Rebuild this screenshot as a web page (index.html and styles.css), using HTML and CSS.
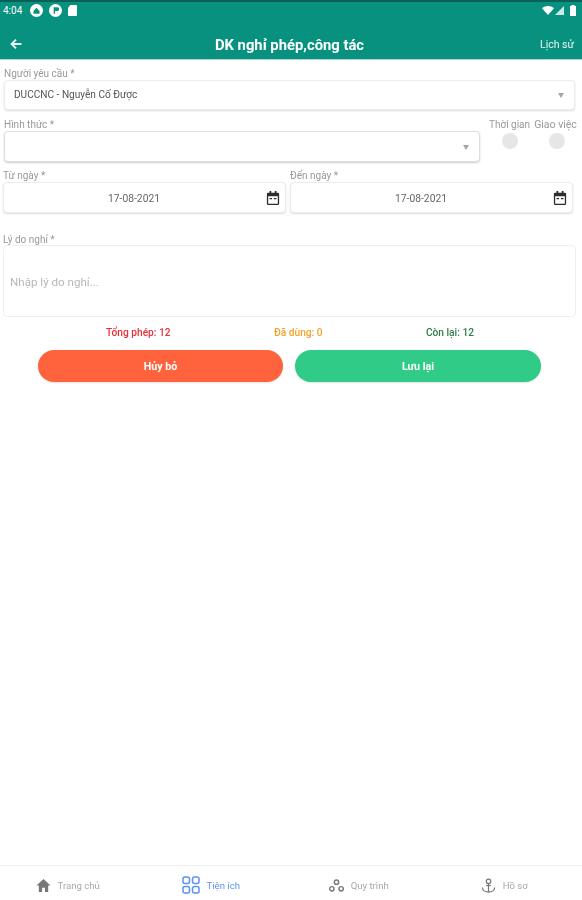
FILE: index.html
```html
<!DOCTYPE html>
<html lang="vi">
<head>
<meta charset="utf-8">
<title>DK nghỉ phép, công tác</title>
<link rel="stylesheet" href="styles.css">
</head>
<body>
<div class="app">
  <header class="top">
    <div class="status">
      <div class="status-left">
        <span class="clock">4:04</span>
        <svg class="st-icon" viewBox="0 0 12 12"><circle cx="6" cy="6" r="6" fill="#fff"/><path d="M3.2 6.5 6 3.4l2.8 3.1V9H3.2z" fill="#08917f"/></svg>
        <svg class="st-icon" viewBox="0 0 12 12"><circle cx="6" cy="6" r="6" fill="#fff"/><path d="M4.3 3h3.4a1.6 1.6 0 0 1 0 3.4H5.6V9H4.3z" fill="#08917f"/></svg>
        <svg class="st-icon st-card" viewBox="0 0 9 11"><path d="M2.5 0H8a1 1 0 0 1 1 1v9a1 1 0 0 1-1 1H1a1 1 0 0 1-1-1V2.8z" fill="#fff"/></svg>
      </div>
      <div class="status-right">
        <svg class="sys-wifi" viewBox="0 0 12 9"><path d="M0 2.2C3.4-.7 8.6-.7 12 2.2L6 9z" fill="#fff"/></svg>
        <svg class="sys-signal" viewBox="0 0 9 9"><path d="M9 0v9H0z" fill="#cfe9e5"/></svg>
        <svg class="sys-batt" viewBox="0 0 6 11"><path d="M1.5 0h3v1H6v10H0V1h1.5z" fill="#fff"/></svg>
      </div>
    </div>
    <div class="toolbar">
      <svg class="back" viewBox="0 0 12 12"><path d="M11.5 6H2M6 1.6 1.6 6 6 10.4" fill="none" stroke="#e6f4f2" stroke-width="2"/></svg>
      <h1 class="title">DK nghỉ phép,công tác</h1>
      <span class="history">Lịch sử</span>
    </div>
  </header>

  <main class="form">
    <section class="field requester">
      <label class="label">Người yêu cầu *</label>
      <div class="box select">
        <span class="value">DUCCNC - Nguyễn Cố Được</span>
        <span class="caret"></span>
      </div>
    </section>

    <section class="type-row">
      <div class="field type-field">
        <label class="label">Hình thức *</label>
        <div class="box select type-select"><span class="caret"></span></div>
      </div>
      <div class="toggle toggle-time"><span class="toggle-label">Thời gian</span><span class="dot"></span></div>
      <div class="toggle toggle-work"><span class="toggle-label">Giao việc</span><span class="dot"></span></div>
    </section>

    <section class="date-row">
      <div class="field date-from">
        <label class="label">Từ ngày *</label>
        <div class="box date">
          <span class="date-value">17-08-2021</span>
          <svg class="cal" viewBox="0 0 16 16"><path d="M4 0h2v2h4V0h2v2h1.5A1.5 1.5 0 0 1 15 3.5v11a1.5 1.5 0 0 1-1.5 1.5h-11A1.5 1.5 0 0 1 1 14.5v-11A1.5 1.5 0 0 1 2.500 2H4zM2.500 6v8.500h11V6zM4 8h3v1.500H4zM9 8h3v1.500H9z" fill="#2c2c2c" fill-rule="evenodd"/></svg>
        </div>
      </div>
      <div class="field date-to">
        <label class="label">Đến ngày *</label>
        <div class="box date">
          <span class="date-value">17-08-2021</span>
          <svg class="cal" viewBox="0 0 16 16"><path d="M4 0h2v2h4V0h2v2h1.5A1.5 1.5 0 0 1 15 3.5v11a1.5 1.5 0 0 1-1.5 1.5h-11A1.5 1.5 0 0 1 1 14.5v-11A1.5 1.5 0 0 1 2.500 2H4zM2.500 6v8.500h11V6zM4 8h3v1.500H4zM9 8h3v1.500H9z" fill="#2c2c2c" fill-rule="evenodd"/></svg>
        </div>
      </div>
    </section>

    <section class="field reason">
      <label class="label">Lý do nghỉ *</label>
      <div class="box textarea">Nhập lý do nghỉ...</div>
    </section>

    <section class="stats">
      <span class="stat stat-total">Tổng phép: 12</span>
      <span class="stat stat-used">Đã dùng: 0</span>
      <span class="stat stat-left">Còn lại: 12</span>
    </section>

    <section class="actions">
      <button class="btn btn-cancel">Hủy bỏ</button>
      <button class="btn btn-save">Lưu lại</button>
    </section>
  </main>

  <nav class="tabs">
    <a class="tab">
      <svg class="tab-icon" viewBox="0 0 16 16"><path d="M8 1 0.500 8H3v7h3.500v-4.500h3V15H13V8h2.500z" fill="#777"/></svg>
      <span>Trang chủ</span>
    </a>
    <a class="tab tab-active">
      <svg class="tab-icon tab-icon-lg" viewBox="0 0 18 18"><g fill="none" stroke="#5b93f0" stroke-width="1.500"><rect x="1" y="1" width="6.500" height="6.500" rx="2"/><rect x="10.500" y="1" width="6.500" height="6.500" rx="2"/><rect x="1" y="10.500" width="6.500" height="6.500" rx="2"/><rect x="10.500" y="10.500" width="6.500" height="6.500" rx="2"/></g></svg>
      <span>Tiện ích</span>
    </a>
    <a class="tab">
      <svg class="tab-icon" viewBox="0 0 16 16"><g fill="none" stroke="#777" stroke-width="1.500"><circle cx="8" cy="4.500" r="2.300"/><circle cx="3" cy="11.500" r="2.300"/><circle cx="13" cy="11.500" r="2.300"/></g></svg>
      <span>Quy trình</span>
    </a>
    <a class="tab">
      <svg class="tab-icon" viewBox="0 0 16 16"><g fill="none" stroke="#777" stroke-width="1.300"><circle cx="8" cy="3.500" r="2.400"/><path d="M8 6v9M1.500 10c0 3 3 5 6.500 5s6.500-2 6.500-5"/><path d="M5.500 8h5"/></g></svg>
      <span>Hồ sơ</span>
    </a>
  </nav>
</div>
</body>
</html>
```

FILE: styles.css
```css
* { box-sizing: border-box; }

html, body {
  margin: 0;
  height: 100%;
  background: #fff;
}

.app {
  width: 582px;
  height: 900px;
  display: flex;
  flex-direction: column;
  font-family: Roboto, "Noto Sans", sans-serif;
  color: #333;
  overflow: hidden;
  filter: blur(0.6px);
}

/* Header */
.top {
  height: 60px;
  flex: none;
  background: #08917f;
  border-top: 2px solid #0b5f56;
  border-bottom: 1px solid #a9d8d1;
  color: #fff;
}

.status {
  height: 16px;
  padding: 0 6px 0 3px;
  display: flex;
  justify-content: space-between;
  align-items: center;
}

.status-left, .status-right {
  display: flex;
  align-items: center;
}

.status-left { gap: 6px; }
.status-right { gap: 1px; }

.clock { font-size: 10px; margin-right: 2px; width: 19px; }
.st-icon { width: 13px; height: 13px; display: block; }
.st-card { width: 9px; height: 11px; }
.sys-wifi { width: 12px; height: 9px; }
.sys-signal { width: 9px; height: 9px; }
.sys-batt { width: 6px; height: 11px; margin-left: 5px; }

.toolbar {
  height: 41px;
  padding: 12px 8px 0 10px;
  display: flex;
  align-items: center;
}

.back { width: 12px; height: 12px; flex: none; margin-top: -1px; }

.title {
  flex: 1;
  margin: 0;
  padding-left: 17px;
  font-size: 14.800px;
  font-weight: 700;
  text-align: center;
}

.history { font-size: 10.500px; color: #eaf6f4; }

/* Form */
.form {
  flex: 1;
  min-height: 0;
}

.label {
  display: block;
  font-size: 10px;
  line-height: 11px;
  color: #999;
}

.box {
  background: #fff;
  border: 1px solid #ececec;
  border-radius: 4px;
  box-shadow: 0 1px 2px rgba(0, 0, 0, 0.14);
}

.requester { padding: 8px 7px 0 4px; }
.requester .label { margin-bottom: 1px; }

.select {
  height: 30px;
  padding: 0 10px 0 9px;
  display: flex;
  align-items: center;
  justify-content: space-between;
}

.value { font-size: 10.100px; color: #555; margin-top: -1px; }

.caret {
  width: 0;
  height: 0;
  margin-left: auto;
  border-left: 3.500px solid transparent;
  border-right: 3.500px solid transparent;
  border-top: 5px solid #a5a5a5;
}

.type-row {
  margin-top: 9px;
  padding-left: 4px;
  display: flex;
  align-items: flex-start;
}

.type-field { width: 476px; flex: none; }
.type-field .label { margin-bottom: 1px; }
.type-select { height: 31px; border-color: #dedede; border-width: 1.500px; box-shadow: 0 1px 2px rgba(0, 0, 0, 0.2); }
.type-select .caret { margin-top: 1px; }

.toggle {
  display: flex;
  flex-direction: column;
  align-items: center;
  gap: 3px;
}

.toggle-time { margin-left: 8px; width: 43px; }
.toggle-work { margin-left: 4px; width: 44px; }
.toggle-label { font-size: 10px; line-height: 11px; color: #999; white-space: nowrap; }
.toggle-work .toggle-label { font-size: 10.500px; margin-right: 3px; }

.dot {
  width: 16px;
  height: 16px;
  border-radius: 50%;
  background: #e6e6e6;
}

.date-row {
  margin-top: 8px;
  padding-left: 3px;
  display: flex;
  gap: 4px;
}

.date-from, .date-to { width: 283px; }
.date-row .label { margin-bottom: 1px; }

.date {
  height: 31px;
  padding-right: 5px;
  display: flex;
  align-items: center;
}

.date-value {
  flex: 1;
  padding-top: 1px;
  padding-right: 2px;
  text-align: center;
  font-size: 10.300px;
  color: #666;
}

.cal { width: 14px; height: 16px; flex: none; }

.reason { margin-top: 21px; padding: 0 6px 0 3px; }

.textarea {
  height: 72px;
  padding: 2px 6px 0;
  display: flex;
  align-items: center;
  font-size: 11.600px;
  color: #b8b8b8;
  border-color: #efefef;
  box-shadow: none;
}

.stats {
  height: 12px;
  margin-top: 9px;
  padding: 0 108px 0 106px;
  display: flex;
  justify-content: space-between;
  align-items: center;
}

.stat { font-size: 10.200px; font-weight: 500; }
.stat-total { color: #e8303a; }
.stat-used { color: #f5a32c; }
.stat-left { color: #2e7d4a; }

.actions {
  margin-top: 12px;
  padding-left: 38px;
  display: flex;
  gap: 12px;
}

.btn {
  height: 32px;
  padding: 0;
  border: 0;
  border-radius: 16px;
  font-family: inherit;
  font-size: 10.700px;
  font-weight: 700;
  color: #fff;
  box-shadow: 0 1px 2px rgba(0, 0, 0, 0.12);
}

.btn-cancel { width: 245px; background: #ff633d; }
.btn-save { width: 246px; background: #2fcb87; }

/* Tabs */
.tabs {
  height: 35px;
  flex: none;
  padding-top: 4px;
  border-top: 1px solid #efefef;
  display: grid;
  grid-template-columns: repeat(4, 1fr);
  align-items: center;
}

.tab {
  padding-right: 10px;
  display: flex;
  align-items: center;
  justify-content: center;
  gap: 7px;
  font-size: 9.600px;
  color: #a8a8a8;
}

.tab-active { padding-right: 14px; gap: 6px; color: #5b93f0; }
.tab-icon { width: 15px; height: 15px; flex: none; }
.tab-icon-lg { width: 18px; height: 18px; }
```
